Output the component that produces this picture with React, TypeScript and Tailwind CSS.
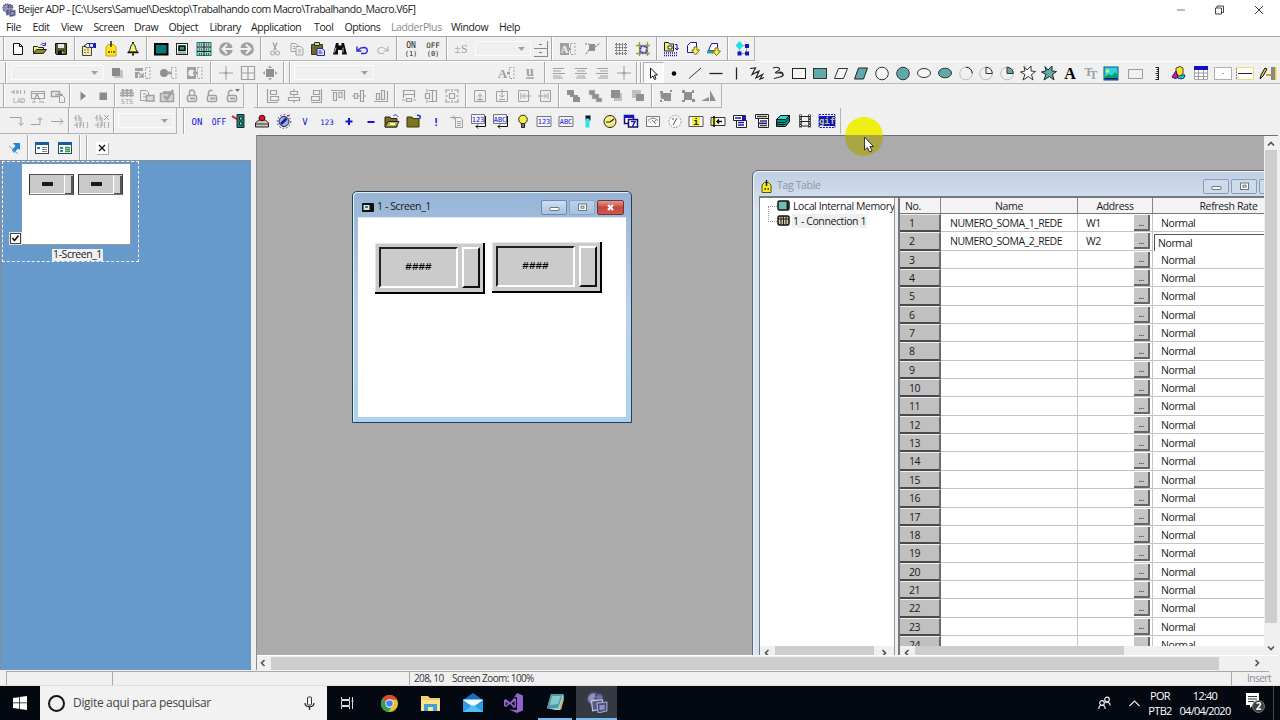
import React from "react";
import clsx from "clsx";

const G = "#a0a0a0";
const TEAL = "#5fa9a9";
const NAVY = "#1616b4";

const PixelText = ({ x = 8, y = 12, size = 7, fill = "#1414d8", weight = "normal", children }: any) => (
  <text
    x={x}
    y={y}
    fontSize={size}
    fill={fill}
    textAnchor="middle"
    fontFamily="DejaVu Sans Mono, monospace"
    fontWeight={weight}
  >
    {children}
  </text>
);

const Serif = ({ x = 8, y = 13, size = 14, fill = G, children }: any) => (
  <text
    x={x}
    y={y}
    fontSize={size}
    fill={fill}
    textAnchor="middle"
    fontFamily="Liberation Serif, serif"
    fontWeight="bold"
  >
    {children}
  </text>
);

const star = "M4 1.5 7 5 11 1 11 6 15.5 6.5 11.5 9.5 13 15 8.500 11.5 3 15 5 9.5 .5 7 5 6Z";
const lock = (
  <g fill="none" stroke={G}>
    <rect x="3.5" y="7.5" width="9" height="6" rx="1.5" strokeWidth="1.6" />
    <path d="M6 10.5h5" strokeWidth="2" />
  </g>
);
const dashes = <path d="M10.5 2.5h4.5v11h-4.5z" stroke={G} strokeDasharray="2 1.5" />;

// All toolbar drawings on a 16x16 grid
const glyphs: Record<string, React.ReactNode> = {
  file: <path d="M3.5 2.5h6l3 3v8h-9zM9.5 2.5v3h3" fill="#fff" stroke="#111" />,
  open: (
    <>
      <path d="M1.5 12.5v-7h4l1 1h5v2" fill="#f5f07a" stroke="#222" />
      <path d="M1.5 12.5l3-4h10l-3 4z" fill="#8a8a20" stroke="#222" />
      <path d="M8.5 4c2-2 4-2 5 0m0-2.5v3h-3" stroke="#2030c0" />
    </>
  ),
  save: (
    <>
      <path d="M2.5 2.5h11v11h-10l-1-1z" fill="#5c5c28" stroke="#111" />
      <path d="M5 3h6v4H5z" fill="#e8e8e8" />
      <path d="M5 9.5h6v4H5z" fill="#111" />
      <path d="M9 10.5h1.5v2H9z" fill="#eee" />
    </>
  ),
  props: (
    <>
      <path d="M1.5 5.5h9v9h-9z" fill="#f6ee9a" stroke="#444" />
      <path d="M3 9h6M3 11.5h6" stroke="#777" strokeDasharray="2 1" />
      <path d="M3 5l4-3 3 3-3 2z" fill="#fff" stroke="#222" />
      <path d="M8 2.500h4.500v4H9z" fill="#d8e0ff" stroke="#2020a0" />
      <path d="M13 2h2v5h-2z" fill="#1818c0" />
    </>
  ),
  tag: (
    <>
      <path d="M3 6l2.5-2.5h5L13 6v9H3z" fill="#fbe61e" stroke="#d0a000" />
      <path d="M8 0v6" stroke="#222" strokeWidth="1.5" />
      <path d="M5 11h2m1 0h1m1 0h2" stroke="#a06000" strokeWidth="2" />
    </>
  ),
  bell: (
    <>
      <path d="M8 2.5c-3 1-2 6-4.5 8.5h9C10 8.5 11 3.5 8 2.5z" fill="#f7f26a" stroke="#222" />
      <path d="M2.5 11.5h11" stroke="#111" strokeWidth="1.5" />
      <path d="M7 13.5h2M8 1v1.5" stroke="#111" strokeWidth="2" />
    </>
  ),
  screen: <rect x="2" y="3" width="12.500" height="10.5" fill="#087878" stroke="#000" strokeWidth="2" />,
  screen2: (
    <>
      <rect x="2.5" y="2.5" width="11" height="11" fill="#fff" stroke="#222" />
      <rect x="5" y="5" width="6" height="4.5" fill="#1aa08e" stroke="#000" strokeWidth="1.5" />
      <path d="M4 12h8" stroke="#555" />
    </>
  ),
  screens: (
    <>
      <rect x="1" y="1.500" width="14" height="13" fill="#a5cfca" stroke="#23786e" />
      <path d="M8 1v14M1 6h14M1 10.5h14" stroke="#222" />
      <path d="M3 3.5h3M3 8.5h3M3 13h3M10 3.5h3M10 8.5h3M10 13h3" stroke="#117b66" strokeWidth="2" strokeDasharray="1 1" />
    </>
  ),
  back: (
    <>
      <circle cx="8" cy="8" r="6.8" fill={G} />
      <path d="M15 8H5M9 3.5 4.5 8 9 12.5" stroke="#f0f0f0" strokeWidth="2" />
    </>
  ),
  fwd: (
    <>
      <circle cx="8" cy="8" r="6.8" fill={G} />
      <path d="M1 8h10M7 3.5 11.5 8 7 12.5" stroke="#f0f0f0" strokeWidth="2" />
    </>
  ),
  cut: (
    <g stroke={G}>
      <path d="M6 1.5 9 9M10 1.5 7 9" strokeWidth="1.3" />
      <circle cx="5.5" cy="12" r="2" />
      <circle cx="10.5" cy="12" r="2" />
    </g>
  ),
  copy: (
    <g stroke={G} fill="#f0f0f0">
      <path d="M2 2.5h5l2 2v6H2z" />
      <path d="M7 5.5h4.5l2.5 2v6.5H7z" />
      <path d="M4 5.5h2M4 7.5h2M9 9h3M9 11h3" />
    </g>
  ),
  paste: (
    <>
      <path d="M1.5 3.5h11v10h-11z" fill="#6f6a2a" stroke="#333" />
      <path d="M4.5 1.5h5v3h-5z" fill="#d0d0a0" stroke="#333" />
      <path d="M7 7.5h5l2.5 2v5H7z" fill="#e4e8ff" stroke="#2424a0" />
      <path d="M8.5 10h3m-3 2h4" stroke="#2424a0" />
    </>
  ),
  find: (
    <>
      <path d="M4 2h2.5v2.5H9.5V2H12l1 4 2 7.5h-5V9H6v4.5H1L3 6z" fill="#0a0a0a" />
      <path d="M4 6.5l-1.5 5M11 6.5v5" stroke="#eee" strokeWidth=".8" />
    </>
  ),
  undo: <path d="M7 12.500h2.500c5 0 5-6 0-6-3 0-4 1-5.500 2.500M3 5.500V10h4.500" stroke="#2626e0" strokeWidth="1.400" />,
  redo: <path d="M9 12.500H6.500c-5 0-5-6 0-6 3 0 4 1 5.500 2.500M13 5.500V10H8.500" stroke="#b0b0b0" strokeWidth="1.200" />,
  onbit: (
    <>
      <PixelText y={7} fill="#222" size={8}>ON</PixelText>
      <PixelText y={14.5} fill="#222" size={7}>(1)</PixelText>
    </>
  ),
  offbit: (
    <>
      <PixelText y={7} fill="#222" size={7.5}>OFF</PixelText>
      <PixelText y={14.5} fill="#222" size={7}>(0)</PixelText>
    </>
  ),
  pms: <text x="8" y="12" fontSize="12" fill={G} textAnchor="middle" fontFamily="Liberation Serif, serif">±S</text>,
  abox: (
    <>
      <path d="M0 2h9v12H0z" fill={G} />
      <Serif x={4.5} y={12} size={11} fill="#f0f0f0">A</Serif>
      <path d="M8 8h3" stroke={G} strokeWidth="3" />
      {dashes}
    </>
  ),
  corner: (
    <>
      <path d="M5 3h6v7H5z" fill="#8f8f8f" />
      <path d="M1 3h4M11 6l5-4M5 9l-4 5" stroke={G} strokeWidth="1.500" strokeDasharray="2 1" />
    </>
  ),
  grid: <path d="M3.5 2v12M6.5 2v12M9.5 2v12M12.5 2v12M2 3.5h12M2 6.5h12M2 9.5h12M2 12.5h12" stroke="#707070" strokeDasharray="1.5 .7" />,
  snap: (
    <>
      <path d="M4.5 1v14M12.5 1v14M1 4.5h14M1 12.5h14" stroke="#9c9c30" strokeWidth="1.3" />
      <rect x="5.5" y="5.5" width="6" height="6" fill="#e8e8ff" stroke="#2020c0" strokeDasharray="2 1" strokeWidth="1.5" />
    </>
  ),
  compile: (
    <>
      <path d="M1.5 1.5h4l1 1.5h4v7h-9z" fill="#f3ee7c" stroke="#222" />
      <path d="M5 5h4v3H5z" fill="#fff" stroke="#333" />
      <path d="M12 3.5h2v5m-2-1.5 2 2 1.5-2" stroke={NAVY} />
      <path d="M1 12h14M1 14.5h14" stroke={NAVY} strokeWidth="1.5" strokeDasharray="1 1" />
    </>
  ),
  download: (
    <>
      <path d="M2.5 11.5V4.5l3-3h6v10z" fill="#fff" stroke={NAVY} />
      <path d="M9 6h3v3h2.5L10.5 14 6.5 9H9z" fill="#fbf04a" stroke="#7a7010" />
    </>
  ),
  download2: (
    <>
      <path d="M2.5 9.5l3-7h6v7z" fill="#fff" stroke={NAVY} />
      <path d="M1 9.5h8v3H1z" fill="#2fa49a" />
      <path d="M9 7h3v3h2.5L10.5 14.5 6.5 10H9z" fill="#fbf04a" stroke="#7a7010" />
    </>
  ),
  nodes: (
    <>
      <path d="M4.5 4.5h7v8h-7z" stroke="#555" strokeDasharray="1 1" />
      <path d="M4.5 0 8.5 4.5 4.5 9 .5 4.500z" fill="#20dce8" />
      <path d="M10 3h4v4h-4zM2.5 10.5h4v4h-4zM10 10.5h4v4h-4z" fill="#1515c8" />
    </>
  ),
  layer: (
    <>
      <path d="M5 5h9v8H5z" fill="#c4c4c4" />
      <path d="M3 3h8v8H3z" fill="#8a8a8a" />
    </>
  ),
  layerRep: (
    <>
      <path d="M0 3h8v3H0zM0 7h3v6H0z" fill={G} />
      <path d="M3 7l5 5M8 8v4H4" stroke={G} strokeWidth="1.5" />
      {dashes}
    </>
  ),
  fillRep: (
    <>
      <circle cx="3" cy="8" r="4" fill="#8f8f8f" />
      <path d="M6 8h5" stroke={G} strokeWidth="3" />
      {dashes}
    </>
  ),
  colorRep: (
    <>
      <rect x="0" y="2" width="9" height="12" fill={G} />
      <circle cx="4.5" cy="8" r="3.2" fill="#f0f0f0" />
      <path d="M6 8h5" stroke={G} strokeWidth="3" />
      {dashes}
    </>
  ),
  cross: (
    <>
      <path d="M1 8h14M8 1v14" stroke={G} />
      <circle cx="8" cy="8" r="1.500" fill={G} />
    </>
  ),
  crossBox: <path d="M1.5 1.5h13v13h-13zM1 8h14M8 1v14" stroke={G} strokeWidth="1.2" />,
  expand: (
    <>
      <rect x="4" y="4" width="8" height="8" fill="#8f8f8f" />
      <path d="M8 .5 10 3H6zM8 15.5 6 13h4zM.5 8 3 6v4zM15.5 8 13 10V6z" fill={G} />
    </>
  ),
  arep: (
    <>
      <Serif x={3.5} y={13} size={13}>A</Serif>
      <path d="M8 8h3" stroke={G} strokeWidth="2.500" />
      {dashes}
    </>
  ),
  under: (
    <>
      <Serif y={11} size={14}>u</Serif>
      <path d="M4 13h8" stroke={G} strokeWidth="1.5" />
    </>
  ),
  alignL: <path d="M2 3.5h11M2 6h8M2 8.5h12M2 11h8M2 13h10" stroke={G} />,
  alignC: <path d="M2 3.5h12M4 6h8M2 8.5h12M4 11h8M3 13h10" stroke={G} />,
  alignR: <path d="M3 3.5h11M6 6h8M2 8.5h12M6 11h8M4 13h10" stroke={G} />,
  cursor: <path d="M5.5 2v10l2.5-2 1.5 3.5 1.5-.8L9.5 9h3z" fill="#fff" stroke="#111" />,
  dot: <circle cx="8" cy="8.5" r="2.3" fill="#000" />,
  line: <path d="M2 13.5 14 3" stroke="#333" />,
  hline: <path d="M1.5 8.5h13" stroke="#222" strokeWidth="1.3" />,
  vline: <path d="M8.5 2.5v12" stroke="#222" strokeWidth="1.3" />,
  poly: <path d="M1 3.500 6.500 3 3 9.500 10 6 7 13 13.500 9.500 11 14 15 12.500" stroke="#222" strokeWidth="1.200" />,
  free: <path d="M3 3c5-2 9 1 5 3s-3 2 1 2c6 0 5 3 1 4s-6 1-6 2M8 8c4-2 6 0 4 3" stroke="#222" strokeWidth="1.1" />,
  rect: <rect x="1.5" y="3.5" width="13" height="10" fill="#f6f6f6" stroke="#222" />,
  rectf: <rect x="1.5" y="3.5" width="13" height="10" fill={TEAL} stroke="#333" />,
  par: <path d="M5.5 3.5h9l-4 10h-9z" fill="#f6f6f6" stroke="#333" />,
  parf: <path d="M5.5 3h9l-4 11h-9z" fill={TEAL} stroke="#222" />,
  circ: <circle cx="8" cy="8.5" r="6.3" fill="#f6f6f6" stroke="#333" />,
  circf: <circle cx="8" cy="8.5" r="6.3" fill={TEAL} stroke="#333" />,
  ell: <ellipse cx="8" cy="8" rx="6.5" ry="4.5" fill="#f6f6f6" stroke="#333" />,
  ellf: <ellipse cx="8" cy="8" rx="6.5" ry="4.8" fill={TEAL} stroke="#333" />,
  arc: (
    <>
      <circle cx="8" cy="8.5" r="6.3" stroke="#c0c0c0" />
      <path d="M8 2.2a6.3 6.3 0 0 1 6.3 6.3" stroke="#222" />
    </>
  ),
  pie: (
    <>
      <circle cx="8" cy="8.5" r="6.3" stroke="#bbb" />
      <path d="M8 2.2v6.3h6.3A6.3 6.3 0 0 0 8 2.2z" fill="#f6f6f6" stroke="#333" />
    </>
  ),
  pief: (
    <>
      <circle cx="8" cy="8.5" r="6.3" stroke="#bbb" />
      <path d="M8 2.2v6.3h6.3A6.3 6.3 0 0 0 8 2.2z" fill={TEAL} stroke="#333" />
    </>
  ),
  star: <path d={star} fill="#fff" stroke="#333" />,
  starf: <path d={star} fill={TEAL} stroke="#222" />,
  textA: <Serif size={16} y={14} fill="#000">A</Serif>,
  textT: (
    <Serif y={11} size={12}>
      T<tspan dx="-3" dy="3">T</tspan>
    </Serif>
  ),
  picture: (
    <>
      <rect x="1" y="2" width="14" height="13" fill="#25d5ee" stroke="#1a4a70" />
      <circle cx="4.5" cy="6" r="1.8" fill="#f8f23c" />
      <path d="M1.5 12 6 9l3 2 3-4 2.5 3v4.5h-13z" fill="#0e9c60" />
      <path d="M1.5 13h13v1.5h-13z" fill="#101880" />
    </>
  ),
  panel: <path d="M1.5 4.5h14v9h-14z" fill="#f0f0f0" stroke="#9a9a9a" />,
  scale: <path d="M9.5 2v13M6.500 2.500h3M7.5 4.5h2M7.5 6.5h2M6.500 8.500h3M7.5 10.5h2M7.5 12.5h2M6.500 14.500h3" stroke="#222" />,
  shapes: (
    <>
      <path d="M6 10a4 4 0 1 0 8 0z" fill="#15c8d8" stroke="#146" />
      <path d="M5 3l4-1.5 3 1.5v6L8.5 11 5 9z" fill="#f6e42a" stroke="#443" />
      <path d="M5 6 1 12l3 1.5 3-1z" fill="#c41ac4" stroke="#504" />
    </>
  ),
  table: (
    <>
      <path d="M1.5 1.5h13v13h-13z" fill="#fff" stroke="#aaa" />
      <path d="M1 1h14v4H1z" fill="#1010c0" />
      <path d="M1 8h14M1 11.5h14M5.5 5v10M10.5 5v10" stroke="#999" />
    </>
  ),
  box1: (
    <>
      <rect x="-.5" y="2.5" width="17" height="12" fill="#fff" stroke="#b0b0b0" />
      <path d="M7.5 8.5h1.5" stroke="#888" />
    </>
  ),
  box2: (
    <>
      <rect x="-.5" y="2.5" width="17" height="12" fill="#fff" stroke="#e8e080" />
      <path d="M-.5 3v11" stroke="#c07070" strokeDasharray="2 1" />
      <path d="M1 8.5h14" stroke="#222" />
    </>
  ),
  pencil: (
    <>
      <path d="M1 14l1-4 4-7 2 1-4 7z" fill="#e2d438" stroke="#111" />
      <path d="M7 10h5" stroke="#e0a020" strokeWidth="2" />
      <path d="M12 2h4v13h-4z" fill="#888" />
      <path d="M16 2h1.500v13H16z" fill="#e6d838" />
    </>
  ),
  lad: (
    <>
      <path d="M1 4h3M4 2v4M7 2v4M7 4h2M11 2c-1 1-1 3 0 4M14 2c1 1 1 3 0 4" stroke={G} />
      <PixelText y={14.5} x={9} fill={G} size={7}>LAD</PixelText>
    </>
  ),
  ladwin: <path d="M1.5 3.5h13v7h-13zM4 12l3-6 3 6M2 14h4m3 0h5M1.5 5.5h13" stroke={G} strokeWidth="1.2" />,
  winCopy: (
    <g stroke={G}>
      <path d="M1.5 3.5h8v5h-8zM5 6.5h7v4" strokeWidth="1.5" />
      <path d="M9.5 7.5h3l2 2v5h-5z" fill="#eee" />
    </g>
  ),
  play: <path d="M5.5 3.5 11 8l-5.5 4.5z" fill="#888" />,
  stop: <path d="M4.500 4.500h7.500v7.500H4.500z" fill="#8b8b8b" />,
  sts: (
    <>
      <path d="M2 2.500h12M1 5h14M1 7.500h14M4 1v8M8 1v8M12 1v8" stroke={G} strokeWidth="1.500" />
      <PixelText y={15.5} fill={G} size={7}>STS</PixelText>
    </>
  ),
  docDev: (
    <g stroke={G}>
      <path d="M1.5 2.5h6l2 2v8h-8zM4 6h3M4 9h3" />
      <path d="M7.500 7.500h7.500v5.500H7.500z" fill="#ddd" strokeWidth="1.5" />
    </g>
  ),
  checkDev: (
    <g stroke={G}>
      <path d="M1.5 5.500h13v8h-13zM4 4h8" fill="#d4d4d4" strokeWidth="1.5" />
      <path d="M5 8l3 3 6-9" strokeWidth="2.5" />
    </g>
  ),
  lock1: (
    <>
      {lock}
      <path d="M5.5 7V4.5a2.5 2.5 0 0 1 5 0V7" stroke={G} strokeWidth="1.5" />
    </>
  ),
  lock2: (
    <>
      {lock}
      <path d="M4.5 7V4a2.5 2.5 0 0 1 4-1" stroke={G} strokeWidth="1.5" />
    </>
  ),
  lock3: (
    <>
      {lock}
      <path d="M4.5 7V4a2.5 2.5 0 0 1 4-1" stroke={G} strokeWidth="1.5" />
      <path d="M11 1h5l-2.5 3z" fill="#777" />
    </>
  ),
  al1: <path d="M2.5 1v14M3 14.500h10M5.5 2.500h6v4h-6zM5.5 8.500h8v4h-8z" stroke={G} strokeWidth="1.2" />,
  al2: <path d="M8 1v2M8 6.500v2M8 13v2M4.5 3.5h7v3h-7zM2.5 9.5h11v3h-11z" stroke={G} strokeWidth="1.2" />,
  al3: <path d="M13.5 1v14M3 14.500h10M5.5 2.500h6v4h-6zM3.5 8.500h8v4h-8z" stroke={G} strokeWidth="1.2" />,
  al4: <path d="M1 2.5h14M14.500 2v10M3.5 4.5h3v8h-3zM9 4.500h3v5H9z" stroke={G} strokeWidth="1.2" />,
  al5: <path d="M1 8h2.500M6.500 8h3M12.500 8H15M3.5 5.5h3v5h-3zM9.5 2.5h3v11h-3z" stroke={G} strokeWidth="1.2" />,
  al6: <path d="M1 13.5h14M14.500 3v10M3.5 5.500h3v6h-3zM8.500 2.500h3v9h-3z" stroke={G} strokeWidth="1.2" />,
  sz1: <path d="M2.5 2.5h11v4h-11zM5.5 10.5h5v3h-5zM1 12h3m8 0h3M2.5 7v3M13.5 7v3" stroke={G} strokeWidth="1.2" />,
  sz2: <path d="M9.5 2.5h4v11h-4zM2.5 5.5h4v5h-4zM4 1v3m0 8v3M6 2.5h3M6 13.5h3" stroke={G} strokeWidth="1.2" />,
  sz3: <path d="M2 5V2h4m4 0h4v3m0 6v3h-4m-4 0H2v-3M5.5 5.5h5v5h-5zM8 1v3m0 8v3M1 8h3m8 0h3" stroke={G} strokeWidth="1.2" />,
  mv1: <path d="M2.5 2.5h11v11h-11zM8 13V6M5.5 8.5 8 6l2.5 2.5M5 11.5h6" stroke={G} />,
  mv2: <path d="M2.5 3.5h11v10h-11zM8 1v8M5.5 7 8 9.5 10.5 7M5 11.5h6" stroke={G} />,
  mv3: <path d="M2.5 2.5h10v11h-10zM15 8H7M9 5.5 6.5 8 9 10.5M5 5v6" stroke={G} />,
  mv4: <path d="M3.5 2.5h10v11h-10zM1 8h8M7 5.5 9.5 8 7 10.5M11 5v6" stroke={G} />,
  z1: <path d="M2 2h7v5h4v2h2v5H8V9H5V7H2z" fill="#8f8f8f" />,
  z2: <path d="M2 2h6v4h4v4h3v4H9v-3H5V7H2z" fill="#8f8f8f" stroke="#d0d0d0" strokeWidth=".6" />,
  z3: (
    <>
      <path d="M6 5h8v8H6z" fill="#c0c0c0" />
      <path d="M3 2h9v8H3z" fill="#8f8f8f" />
    </>
  ),
  z4: (
    <>
      <path d="M2 2h9v8H2z" fill="#c0c0c0" />
      <path d="M6 6h8v7H6z" fill="#909090" />
    </>
  ),
  g1: <path d="M2 3h3v2h8v8H6v-2H3zM12 2h2v2h-2zM2 12h2v2H2z" fill="#8f8f8f" />,
  g2: <path d="M2 2h3v2h7V2h2v3h-2v6h3v3h-3v-2H5v2H2v-2h2V5H2z" fill="#8f8f8f" />,
  tri: <path d="M0 13 8 9v4zM9 2l6 11H9z" fill="#8f8f8f" />,
  ar1: <path d="M2 4.5h11V12M10.5 10l2.5 2.5 2.5-2.5" stroke={G} />,
  ar2: <path d="M2 11.5h9V5M8.5 7 11 4.5 13.5 7" stroke={G} />,
  ar3: <path d="M2 8.5h12M11 5.5l3 3-3 3" stroke={G} />,
  ld1: <path d="M1 5h2M3 2v6M6 2v6M6 5h2v6M1 12h3M4 9v6M7 9v6M7 12h2M11 9c-1 2-1 4 0 6M14 9c1 2 1 4 0 6" stroke={G} />,
  ld2: <path d="M1 5h2M3 2v6M6 2v6M6 5h2v6M1 12h3M4 9v6M7 9v6M7 12h2M11 9c-1 2-1 4 0 6M14 9c1 2 1 4 0 6M10 2l5 5m0-5-5 5" stroke={G} />,
  on: <PixelText y={11.5} size={9}>ON</PixelText>,
  off: <PixelText y={11.5} size={8}>OFF</PixelText>,
  sw: (
    <>
      <path d="M5 1.5h7v13H5z" fill="#148484" stroke="#222" />
      <path d="M7.5 4h2.500v3H7.500zM7.5 9h2.500v3H7.500z" fill="#7be0da" stroke="#111" strokeWidth=".8" />
      <path d="M0 3l5.500 3.500" stroke="#d01818" strokeWidth="2" />
    </>
  ),
  push: (
    <>
      <path d="M1.5 10l3-3h7l3 3v4h-13z" fill="#c8c8b8" stroke="#222" />
      <ellipse cx="8" cy="5" rx="3" ry="2.8" fill="#d81818" stroke="#501010" />
      <path d="M2 11h12" stroke="#333" />
    </>
  ),
  knob: (
    <>
      <circle cx="8" cy="8.5" r="5" fill="#9fb0d8" stroke="#222" />
      <circle cx="8" cy="8.5" r="6.800" stroke="#2020c0" strokeDasharray="1.5 2" />
      <path d="M5 11l5.500-5.500" stroke="#1818b0" strokeWidth="2.5" />
      <path d="M11 3l3-1" stroke="#c02020" />
    </>
  ),
  v: <PixelText y={11.5} size={9}>V</PixelText>,
  n123: <PixelText y={11.5} size={7.5}>123</PixelText>,
  plus: <path d="M8 5v7M4.500 8.500h7" stroke="#1414d8" strokeWidth="2" />,
  minus: <path d="M4.500 9h7" stroke="#1414d8" strokeWidth="2" />,
  fin: (
    <>
      <path d="M1 4h5l1 1.500h6V14H1z" fill="#777018" stroke="#222" />
      <path d="M4 8.500h11L12 14H1z" fill="#b9b23a" stroke="#222" />
      <path d="M9 3c2-2 4-1 5 1" stroke="#2030c0" />
      <path d="M6 10h5v2H6z" fill="#f4f4d0" />
    </>
  ),
  fout: (
    <>
      <path d="M1 4h5l1 1.500h6V14H1z" fill="#7c7420" stroke="#3a3608" />
      <path d="M11 2l3 1v3" stroke="#2030c0" strokeWidth="1.500" />
    </>
  ),
  bang: <PixelText y={12.5} size={11} weight="bold">!</PixelText>,
  docAr: <path d="M1 4.500h5M4 2.500l2 2-2 2M6.500 4.500h5l2 2v8h-7zM8 8.500h4M8 10.500h4M8 12.500h4" stroke={G} />,
  in123: (
    <>
      <path d="M.5 1.500h13v9H.5z" fill="#f4f4ff" stroke="#777" />
      <PixelText y={8.800} x={7} size={7}>123</PixelText>
      <path d="M14.500 3v10.500H5M7 11.500l-2 2 2 2" stroke="#111" />
    </>
  ),
  inabc: (
    <>
      <path d="M.5 1.500h13v9H.5z" fill="#f4f4ff" stroke="#777" />
      <PixelText y={8.800} x={7} size={7}>ABC</PixelText>
      <path d="M14.500 3v10.500H5M7 11.500l-2 2 2 2" stroke="#111" />
    </>
  ),
  bulb: (
    <>
      <circle cx="8" cy="6.500" r="4.300" fill="#f8ee3a" stroke="#222" />
      <path d="M6.500 10.500h3v4h-3z" fill="#777" stroke="#222" />
    </>
  ),
  b123: (
    <>
      <path d="M1 3.500h14v10H1z" fill="#f4f4ff" stroke="#777" />
      <PixelText y={11} size={7}>123</PixelText>
    </>
  ),
  babc: (
    <>
      <path d="M1 3.500h14v10H1z" fill="#f4f4ff" stroke="#777" />
      <PixelText y={11} size={7}>ABC</PixelText>
    </>
  ),
  bar: (
    <>
      <path d="M5.500 2.500h5v5h-5z" fill="#111" />
      <path d="M5.500 5.500h4v9h-4z" fill="#2fe0e8" />
    </>
  ),
  clock: (
    <>
      <circle cx="8" cy="8.500" r="6" fill="#f5ef7c" stroke="#222" />
      <path d="M8 9l4-3M8 9H4" stroke="#222" strokeWidth="1.200" />
    </>
  ),
  win: (
    <>
      <path d="M1.500 2.500h9v8h-9z" fill="#fff" stroke="#101070" strokeWidth="1.500" />
      <path d="M1 2h10v3H1z" fill={NAVY} />
      <path d="M5.500 6.500h9v7.500h-9z" fill="#fff" stroke="#101070" strokeWidth="1.500" />
      <path d="M8 8.500h4l-2.500 5" stroke={NAVY} strokeWidth="1.500" />
    </>
  ),
  meter: (
    <>
      <path d="M1.500 3.500h13v10h-13z" fill="#fafafa" stroke="#777" />
      <path d="M3 7.500c3-3 7-3 10 0M7 7l4 4M11 7l-2 2M4.500 8.500l1 1" stroke="#777" />
    </>
  ),
  gauge: (
    <>
      <circle cx="8" cy="8.500" r="6" fill="#fafafa" stroke="#999" strokeDasharray="2 1" />
      <path d="M6 12l4-7M5 6h2" stroke="#555580" />
    </>
  ),
  info: (
    <>
      <path d="M1 3.500h14v10H1z" fill="#fff" stroke="#555" />
      <path d="M4 4h8v9H4z" fill="#f9f140" />
      <PixelText y={12} size={9} fill="#222" weight="bold">i</PixelText>
    </>
  ),
  io: (
    <>
      <path d="M1 4.500h14v8H1z" fill="#fff" stroke="#333" />
      <path d="M2 5h4v7H2z" fill="#f9f140" />
      <path d="M4 3v11M7 8.500h5M9 6.500l-2 2 2 2" stroke="#000" strokeWidth="1.400" />
    </>
  ),
  comb1: (
    <>
      <path d="M1.500 2.500h12v5h-12zM4.500 7.500h10v7h-10z" fill="#fff" stroke="#222" />
      <path d="M10 3h4v4h-4z" fill={NAVY} />
      <path d="M3 5h6M6 9.500h6M6 12h6" stroke={NAVY} strokeWidth="1.500" />
    </>
  ),
  comb2: (
    <>
      <path d="M1.500 1.500h13v4h-13zM4.500 5.500h10v9h-10z" fill="#fff" stroke="#222" />
      <path d="M3 3.500h10M6 8h7M6 12.500h7" stroke="#333" strokeWidth="1.300" />
      <path d="M5 9.500h8v1.500H5z" fill={NAVY} />
    </>
  ),
  stack: (
    <>
      <path d="M1.500 6.500l4-4h9v6l-4 5h-9z" fill="#0c8a80" stroke="#111" />
      <path d="M1.500 6.500h9l4-4h-9z" fill="#22e0d0" stroke="#111" />
      <path d="M2 9.500h8l4-4M2 11.500h8" stroke="#0a2a20" />
    </>
  ),
  film: (
    <>
      <path d="M3.500 1.500v13M12.500 1.500v13" stroke="#222" strokeWidth="2.500" />
      <path d="M3.500 2v13M12.500 2v13" stroke="#eee" strokeDasharray="1 1.500" />
      <path d="M4 3.500h8M4 8.500h8M4 13h8" stroke="#222" />
    </>
  ),
  gif: (
    <>
      <path d="M0 1.500h16v13H0z" stroke="#1414d8" strokeDasharray="2 1" />
      <path d="M0 3h16v10H0z" fill="#1212b0" />
      <PixelText y={11} size={9} fill="#b8c890" weight="bold">gif</PixelText>
    </>
  ),
};

function Glyph({ name }: { name: string }) {
  return (
    <svg width="16" height="16" viewBox="0 0 16 16" fill="none" className="shrink-0 overflow-visible">
      {glyphs[name]}
    </svg>
  );
}

function Sep({ className = "w-[6.6px]" }: { className?: string }) {
  return (
    <div className={clsx("flex shrink-0 justify-center self-stretch", className)}>
      <div className="w-[2px] border-l border-[#a8a8a8] bg-white" />
    </div>
  );
}

function Tools({ names, cell, sep }: { names: string; cell: string; sep?: string }) {
  return (
    <div className="flex shrink-0 items-center self-stretch">
      {names.split(" ").map((n, i) =>
        n === "|" ? (
          <Sep key={i} className={sep} />
        ) : (
          <div
            key={i}
            className={clsx(
              "flex shrink-0 justify-center",
              cell,
              n === "cursor" && "self-stretch border border-[#b0b0b0] border-r-white border-b-white bg-[#f9f9f9] pt-[3px]",
            )}
          >
            <Glyph name={n} />
          </div>
        ),
      )}
    </div>
  );
}

function Combo({ className }: { className: string }) {
  return (
    <div className={clsx("flex h-[15px] shrink-0 items-center justify-end border border-[#fbfbfb] pr-[5px]", className)}>
      <svg width="7" height="4" viewBox="0 0 7 4">
        <path d="M0 0h7L3.5 4z" fill="#a0a0a0" />
      </svg>
    </div>
  );
}

function Caption({ kind }: { kind: "min" | "max" | "close" }) {
  return (
    <svg width="13" height="9" viewBox="0 0 13 9" fill="none">
      {kind === "min" && <rect x="2" y="4.5" width="9" height="3" rx=".5" fill="#fff" stroke="#6d7480" />}
      {kind === "max" && (
        <>
          <rect x="2.500" y="1" width="8" height="6.500" fill="#fff" stroke="#6d7480" />
          <rect x="5" y="3.200" width="3" height="2" fill="#fff" stroke="#6d7480" />
        </>
      )}
      {kind === "close" && <path d="M4 2l5 5M9 2 4 7" stroke="#fff" strokeWidth="2.2" />}
    </svg>
  );
}

function NumericEntry({ className }: { className?: string }) {
  return (
    <div
      className={clsx(
        "flex h-[51px] w-[110px] border-r-2 border-b-2 border-r-black border-b-black bg-[#cbcbcb] pt-[4px] pb-[4px] pl-[4px] shadow-[inset_1px_1px_0_#e4e4e4]",
        className,
      )}
    >
      <div className="flex w-[79px] items-center justify-center border-2 border-t-[#222] border-r-white border-b-white border-l-[#222] font-['Liberation_Mono',monospace] text-[11px] font-bold text-black">
        ####
      </div>
      <div className="ml-[4px] w-[18px] border-2 border-t-white border-r-[#111] border-b-[#111] border-l-white" />
    </div>
  );
}

function Thumb() {
  return (
    <div className="flex h-[21px] w-[45px] border border-t-[#555] border-r-[#444] border-b-[#777] border-l-[#333] bg-[#c9c9c9]">
      <div className="flex flex-1 items-center justify-center border-r border-b border-white">
        <div className="h-[4px] w-[11px] bg-[#181818]" />
      </div>
      <div className="mt-px w-[8px] border-r-2 border-b border-[#555] border-l-white bg-[#d2d2d2]" />
    </div>
  );
}

function Chevron({ d }: { d: string }) {
  return (
    <svg width="8" height="8" viewBox="0 0 8 8" fill="none" className="shrink-0">
      <path d={d} stroke="#505050" strokeWidth="1.6" />
    </svg>
  );
}
const LEFT = "M5.5 1 2.5 4l3 3";
const RIGHT = "M2.5 1l3 3-3 3";
const UP = "M1 5.5l3-3 3 3";
const DOWN = "M1 2.5l3 3 3-3";

const tags = [
  { name: "NUMERO_SOMA_1_REDE", address: "W1" },
  { name: "NUMERO_SOMA_2_REDE", address: "W2" },
];

const menus = [
  { label: "File", w: "w-[26.5px]" },
  { label: "Edit", w: "w-[28.5px]" },
  { label: "View", w: "w-[32.5px]" },
  { label: "Screen", w: "w-[40.5px]" },
  { label: "Draw", w: "w-[34.5px]" },
  { label: "Object", w: "w-[41px]" },
  { label: "Library", w: "w-[41.5px]" },
  { label: "Application", w: "w-[63px]" },
  { label: "Tool", w: "w-[30.5px]" },
  { label: "Options", w: "w-[46.5px]" },
  { label: "LadderPlus", w: "w-[60px]", off: true },
  { label: "Window", w: "w-[48px]" },
  { label: "Help", w: "w-[40px]" },
];

function AppLogo({ size }: { size: number }) {
  return (
    <svg width={size} height={size} viewBox="0 0 20 20" fill="none">
      <circle cx="7" cy="7" r="5.5" fill="#8f93b8" stroke="#4c5078" strokeWidth="2" strokeDasharray="2 1.2" />
      <circle cx="12" cy="6" r="3.5" fill="#6d7199" stroke="#3e4268" strokeWidth="1.5" strokeDasharray="2 1" />
      <path d="M5 9l10-1 1 8-10 2z" fill="#565b86" stroke="#c6c9e4" />
      <path d="M10 11l9-1v8l-8 2z" fill="#474c78" stroke="#a4a9cc" />
      <path d="M12 13l5-.5v4L12.5 17.5z" fill="#8a94c0" />
    </svg>
  );
}

function TopBar() {
  return (
    <div className="bg-white">
      <div className="flex h-[19px] items-center pl-[2px]">
        <AppLogo size={14} />
        <span className="ml-[2px] text-[10.5px] tracking-[-0.5px] whitespace-nowrap">
          Beijer ADP - [C:\Users\Samuel\Desktop\Trabalhando com Macro\Trabalhando_Macro.V6F]
        </span>
        <svg width="92" height="12" viewBox="0 0 92 12" fill="none" className="mr-[13px] ml-auto">
          <path d="M2 6h8" stroke="#777" />
          <path d="M40.5 4h6v6h-6zM42 4V2h6.5v6.5h-2" stroke="#444" />
          <path d="M80 2l8 8M88 2l-8 8" stroke="#333" />
        </svg>
      </div>
      <div className="flex h-[17px] items-center pl-[6px]">
        {menus.map((m) => (
          <div
            key={m.label}
            className={clsx("shrink-0 text-[10.5px] tracking-[-0.4px] whitespace-nowrap", m.w, m.off && "text-[#8a8a8a]")}
          >
            {m.label}
          </div>
        ))}
      </div>
    </div>
  );
}

function Toolbars() {
  return (
    <div className="h-[99px] overflow-hidden border-t border-[#a8a8a8] bg-[#f0f0f0]">
      <div className="flex h-[24px] w-[755px] items-center border-r border-b border-[#b4b4b4]">
        <Sep className="w-[7.2px]" />
        <Tools
          names="file open save | props tag bell | screen screen2 screens back fwd | cut copy paste find undo redo | onbit offbit | pms"
          cell="w-[21.6px]"
        />
        <Combo className="ml-[3px] w-[56px]" />
        <div className="ml-[3px] flex h-[16px] w-[14px] flex-col border-r border-b border-[#888]">
          <div className="flex flex-1 items-center justify-center border-b border-[#888]">
            <div className="h-px w-[3px] bg-[#777]" />
          </div>
          <div className="flex flex-1 items-center justify-center">
            <div className="h-px w-[3px] bg-[#777]" />
          </div>
        </div>
        <Sep className="w-[8px]" />
        <Tools names="abox corner" cell="w-[24px]" />
        <Tools names="| grid snap | compile download download2 | nodes" cell="w-[21.6px]" />
      </div>

      <div className="flex h-[23px] items-center border-t border-b border-t-white border-b-[#b8b8b8]">
        <Sep className="w-[11px]" />
        <Combo className="w-[93px]" />
        <Tools names="layer layerRep fillRep colorRep" cell="w-[26px]" />
        <Tools names="| cross crossBox expand |" cell="w-[22px]" />
        <Sep />
        <Combo className="w-[80px]" />
        <div className="ml-[122px] flex self-stretch">
          <Tools names="arep under" cell="w-[23px]" />
        </div>
        <Tools names="| alignL alignC alignR cross" cell="w-[21.6px]" />
        <Sep className="w-[4px]" />
        <Sep className="w-[4px]" />
        <Tools
          names="cursor dot line hline vline poly free rect rectf par parf circ circf ell ellf arc pie pief star starf textA textT picture"
          cell="w-[20.83px]"
        />
        <div className="ml-[2px] flex self-stretch">
          <Tools names="panel scale shapes table box1 box2 pencil" cell="w-[22px]" />
        </div>
      </div>

      <div className="flex h-[24px] items-center">
        <div className="flex w-[244px] items-center self-stretch border-r border-b border-[#b4b4b4]">
          <Sep className="w-[8px]" />
          <Tools
            names="lad ladwin winCopy | play stop | sts docDev checkDev | lock1 lock2 lock3"
            cell="w-[20.1px]"
            sep="w-[4.4px]"
          />
        </div>
        <div className="ml-[10px] flex w-[468px] items-center self-stretch border-r border-b border-[#b4b4b4]">
          <Sep className="w-[8px]" />
          <Tools
            names="al1 al2 al3 al4 al5 al6 | sz1 sz2 sz3 | mv1 mv2 mv3 mv4 | z1 z2 z3 z4 | g1 g2 tri"
            cell="w-[21.6px]"
          />
        </div>
      </div>

      <div className="flex h-[26px] items-center">
        <div className="flex w-[177px] items-center self-stretch border-r border-b border-[#b4b4b4] pl-[6px]">
          <Tools names="ar1 ar2 ar3 | ld1 ld2 |" cell="w-[20.4px]" sep="w-[4.1px]" />
          <Combo className="ml-[2px] w-[56px]" />
        </div>
        <div className="flex w-[664px] items-center self-stretch border-r border-[#b4b4b4] pl-[4px]">
          <Sep className="w-[5px]" />
          <Tools
            names="on off sw push knob v n123 plus minus fin fout bang docAr in123 inabc bulb b123 babc bar clock win meter gauge info io comb1 comb2 stack film gif"
            cell="w-[21.72px]"
          />
        </div>
      </div>
    </div>
  );
}

function ScreenManager() {
  return (
    <div className="flex w-[257px] shrink-0 flex-col border-r border-[#8c8c8c] bg-[#f0f0f0] pr-[5px]">
      <div className="flex h-[26px] items-center border-b border-[#8c8c8c] pl-[7px]">
        <svg width="16" height="16" viewBox="0 0 16 16" fill="none">
          <path d="M6 3h7v7l-2-1.500L7 13 5 10l3.500-4z" fill="#2184d4" />
          <path d="M2 6l9 8" stroke="#7a9fc0" />
        </svg>
        <Sep className="w-[10px]" />
        {["#18a", "#2a4"].map((c, i) => (
          <svg key={c} width="16" height="16" viewBox="0 0 16 16" fill="none" className={i ? "ml-[7px]" : "ml-px"}>
            <rect x="1.5" y="2.5" width="13" height="11" fill="#fff" stroke="#345" />
            <path d="M1 2h14v3H1z" fill="#1c5aa8" />
            <path d="M3 7h3v2H3z" fill={c} />
            <path d="M8 7.5h5M8 9.5h5M8 11.5h5" stroke={i ? "#2a9c50" : "#888"} strokeWidth={i ? 1.3 : 1} />
            {i === 1 && <path d="M3 10h3v2H3z" fill="#1a8ac8" />}
          </svg>
        ))}
        <Sep className="ml-[3px] w-[7px]" />
        <Sep className="w-[7px]" />
        <div className="ml-[6px] flex h-[12px] w-[12px] items-center justify-center bg-white shadow-[1px_1px_0_#aaa]">
          <svg width="8" height="8" viewBox="0 0 8 8">
            <path d="M1 1l6 6M7 1 1 7" stroke="#111" strokeWidth="1.4" />
          </svg>
        </div>
      </div>
      <div className="flex-1 border-l border-[#8c8c8c] bg-[#6699cc] pl-px">
        <div className="flex h-[101px] w-[137px] flex-col border border-dashed border-white/90">
          <div className="flex pt-[2px] pl-[6px]">
            <div className="flex h-[13px] w-[13px] shrink-0 items-center justify-center self-end border border-[#e0e0e0] bg-white">
              <svg width="11" height="11" viewBox="0 0 11 11" fill="none">
                <rect x=".5" y=".5" width="10" height="10" stroke="#444" />
                <path d="M2.5 5l2 2.5 4-5" stroke="#111" strokeWidth="1.6" />
              </svg>
            </div>
            <div className="flex h-[81px] w-[109px] gap-[4px] border-r border-b border-[#999] bg-white pt-[10px] pl-[7px]">
              <Thumb />
              <Thumb />
            </div>
          </div>
          <div className="mt-[4px] ml-[49px] flex h-[12px] w-[51px] items-center justify-center bg-[#f0f0f0] text-[10.5px] tracking-[-0.45px] whitespace-nowrap">
            1-Screen_1
          </div>
        </div>
      </div>
    </div>
  );
}

function ScreenWindow() {
  return (
    <div className="absolute top-[55px] left-[95px] h-[232px] w-[280px] rounded-t-[5px] border border-[#26404e] bg-linear-to-b from-[#97b4d6] via-[#b8d2ee] to-[#a9d3ee] px-[5px] pb-[5px] shadow-[inset_1px_1px_0_#e6f1fb]">
      <div className="flex h-[25px] items-center pt-[5px] pl-[4px]">
        <svg width="12" height="9" viewBox="0 0 12 9">
          <rect width="12" height="9" rx="1" fill="#111" />
          <path d="M1.5 2h6v5h-6z" fill="#d8e8d8" />
          <path d="M3 3h3v2H3z" fill="#2a8a90" />
        </svg>
        <span className="ml-[3px] text-[10.5px] tracking-[-0.4px]">1 - Screen_1</span>
        <div className="ml-auto flex gap-[2px] pr-[2px]">
          <div className="flex h-[15px] w-[26px] items-center justify-center rounded-[2px] border border-[#7089a8] bg-linear-to-b from-[#cfe0f2] to-[#a6c2e0]">
            <Caption kind="min" />
          </div>
          <div className="flex h-[15px] w-[26px] items-center justify-center rounded-[2px] border border-[#89a4c6] bg-linear-to-b from-[#bcd2ea] to-[#a6c2e0]">
            <Caption kind="max" />
          </div>
          <div className="flex h-[15px] w-[27px] items-center justify-center rounded-[2px] border border-[#7a3030] bg-linear-to-b from-[#e09a90] via-[#c8453a] to-[#c85a4c]">
            <Caption kind="close" />
          </div>
        </div>
      </div>
      <div className="flex h-[200px] border-t border-[#dde8f4] bg-white pt-[24px] pl-[17px]">
        <NumericEntry className="mt-px" />
        <NumericEntry className="ml-[7px]" />
      </div>
    </div>
  );
}

function TagTable() {
  return (
    <div className="absolute top-[34px] left-[495px] flex h-[524px] w-[570px] flex-col rounded-tl-[6px] border border-[#5f6770] bg-linear-to-b from-[#c0cfe2] to-[#d7e4f2] to-[40px] pl-[6px] shadow-[inset_1px_1px_0_#eef4fa]">
      <div className="flex h-[25px] shrink-0 items-center pt-[5px] pl-[1px]">
        <svg width="13" height="13" viewBox="0 0 13 13">
          <path d="M2 5l2.5-2.5h4L11 5v7.5H2z" fill="#fbe61e" stroke="#55501a" />
          <path d="M6.5 0v6M4.5 9h1.5M7.5 9H9" stroke="#222" strokeWidth="1.5" />
        </svg>
        <span className="ml-[4px] text-[10.5px] tracking-[-0.35px] text-[#8d959f]">Tag Table</span>
        <div className="ml-auto flex gap-[2px] pr-[36px]">
          {(["min", "max", "close"] as const).map((k) => (
            <div
              key={k}
              className="flex h-[15px] w-[26px] items-center justify-center rounded-[2px] border border-[#8b9db5] bg-[#cddbeb]"
            >
              {k !== "close" && <Caption kind={k} />}
            </div>
          ))}
        </div>
      </div>
      <div className="flex flex-1 border-t-2 border-l border-[#74797f]">
        <div className="flex w-[134px] shrink-0 flex-col bg-white">
          <div className="h-[448px] shrink-0 overflow-hidden">
            <div className="mt-[8px] ml-[8px] flex h-[16px] w-[9px] border border-r-0 border-dotted border-[#999]" />
            <div className="-mt-[24px] ml-[17px] flex flex-col">
              {["Local Internal Memory", "1 - Connection 1"].map((label, i) => (
                <div key={label} className="flex h-[15px] items-center">
                  <svg width="13" height="11" viewBox="0 0 13 11" fill="none" className="shrink-0">
                    <rect x="1" y="1" width="11" height="9" rx="1.5" fill={i ? "#c8c8a8" : "#6fbcb4"} stroke="#111" strokeWidth="1.5" />
                    {i === 0 && <path d="M10.5 1v9" stroke="#222" strokeWidth="2" />}
                    {i === 1 && <path d="M4 1v9M6.5 1v9M9 1v9M1 4h11" stroke="#222" />}
                  </svg>
                  <span
                    className={clsx(
                      "ml-[2px] px-px text-[10.5px] leading-[14px] tracking-[-0.4px] whitespace-nowrap",
                      i === 1 && "bg-[#f0f0f0]",
                    )}
                  >
                    {label}
                  </span>
                </div>
              ))}
            </div>
          </div>
          <div className="flex h-[18px] items-start bg-[#f0f0f0]">
            <div className="mt-[3px] ml-[3px]">
              <Chevron d={LEFT} />
            </div>
            <div className="ml-[4px] h-full w-[99px] bg-[#cdcdcd]" />
            <div className="mt-[3px] ml-[6px]">
              <Chevron d={RIGHT} />
            </div>
          </div>
        </div>
        <div className="w-[6px] shrink-0 border-r-2 border-l border-r-[#74797f] border-l-[#999] bg-[#f0f0f0]" />
        <div className="flex w-[404px] shrink-0 flex-col bg-white">
          <div className="h-[448px] shrink-0 overflow-hidden">
            <div className="flex h-[16px] border-b border-[#777] bg-[#f3f3f3] text-[10.5px] leading-[17px] tracking-[-0.35px]">
              <div className="w-[41px] shrink-0 border-r border-[#888] pl-[5px]">No.</div>
              <div className="w-[137px] shrink-0 border-r border-[#888] text-center">Name</div>
              <div className="w-[75px] shrink-0 border-r border-[#888] text-center">Address</div>
              <div className="w-[151px] shrink-0 text-center">Refresh Rate</div>
            </div>
            {Array.from({ length: 24 }, (_, i) => (
              <div
                key={i}
                className="flex h-[18.35px] text-[10.5px] leading-[18px] tracking-[-0.5px] whitespace-nowrap"
              >
                <div className="w-[41px] shrink-0 border-t border-r-2 border-b-2 border-t-[#efefef] border-r-[#6a6a6a] border-b-[#4a4a4a] bg-[#c0c0c0] pl-[9px] leading-[16px]">
                  {i + 1}
                </div>
                <div className="w-[137px] shrink-0 border-r border-b border-[#c4c4c4] pl-[9px]">{tags[i]?.name}</div>
                <div className="flex w-[75px] shrink-0 justify-between border-r border-b border-[#c4c4c4] pr-[2px] pl-[8px]">
                  <span>{tags[i]?.address}</span>
                  <div className="mt-px flex h-[16px] w-[16px] items-center justify-center border-r-2 border-b-2 border-r-[#666] border-b-[#666] bg-[#c6c6c6] text-[9px] leading-none">
                    ...
                  </div>
                </div>
                <div
                  className={clsx(
                    "w-[151px] shrink-0 tracking-[-0.4px]",
                    i === 1 ? "mt-[2px] ml-px border-t border-l border-[#555] pl-[3px] leading-[16px]" : "border-b border-[#c4c4c4] pl-[8px]",
                  )}
                >
                  Normal
                </div>
              </div>
            ))}
          </div>
          <div className="flex h-[18px] bg-[#f0f0f0]">
            <div className="mt-[3px] ml-[3px]">
              <Chevron d={LEFT} />
            </div>
            <div className="ml-[4px] h-full w-[209px] bg-[#cdcdcd]" />
          </div>
        </div>
      </div>
    </div>
  );
}

function Taskbar() {
  return (
    <div className="flex h-[34px] bg-[#040911] text-white">
      <div className="flex w-[40px] items-center justify-center">
        <svg width="14" height="14" viewBox="0 0 14 14">
          <path d="M0 2l6-.8V6.6H0zM6.7 1.1 14 0v6.6H6.7zM0 7.3h6v5.5L0 12zM6.7 7.3H14V14l-7.3-1z" fill="#fff" />
        </svg>
      </div>
      <div className="flex w-[287px] items-center bg-[#f2f2f2] pr-[12px] pl-[8px]">
        <div className="h-[17px] w-[17px] rounded-full border-[2.5px] border-[#151515]" />
        <span className="ml-[8px] text-[12px] tracking-[-0.33px] whitespace-nowrap text-[#444]">Digite aqui para pesquisar</span>
        <svg width="11" height="15" viewBox="0 0 11 15" fill="none" className="ml-auto">
          <rect x="3.5" y="1" width="4" height="8" rx="1" stroke="#333" />
          <path d="M1 7c0 5 9 5 9 0M5.5 11v3" stroke="#333" strokeWidth="1.3" />
        </svg>
      </div>
      <div className="flex w-[40px] items-center justify-center">
        <svg width="15" height="14" viewBox="0 0 15 14" fill="none" stroke="#ddd">
          <path d="M1.5 1v2.5h8V1M1.5 4.5h8v5h-8zM1.5 13v-2.5h8V13M12.5 1v12M11.5 5h2" />
        </svg>
      </div>
      <div className="flex w-[44px] items-center justify-center">
        <svg width="19" height="19" viewBox="0 0 20 20">
          <circle cx="10" cy="10" r="9" fill="#e8c02c" />
          <path d="M10 10 2.2 5.5A9 9 0 0 1 18 6h-8z" fill="#dd4535" />
          <path d="M10 10 2.2 5.5A9 9 0 0 0 9 19l4-7z" fill="#2f9e58" />
          <circle cx="10" cy="10" r="4.4" fill="#fff" />
          <circle cx="10" cy="10" r="3.5" fill="#4285f0" />
        </svg>
      </div>
      <div className="flex w-[39px] items-center justify-center">
        <svg width="19" height="17" viewBox="0 0 19 17">
          <path d="M0 1h7l2 2h10v13H0z" fill="#f3cf6a" />
          <path d="M0 5h19v11H0z" fill="#fbe28e" />
          <path d="M3 9h13v7h-4v-4H7v4H3z" fill="#3ea0dc" />
        </svg>
      </div>
      <div className="flex w-[46px] items-center justify-center">
        <svg width="20" height="20" viewBox="0 0 20 20">
          <path d="M0 7 10 0l10 7v12H0z" fill="#1670c4" />
          <path d="M0 6.5h20v1L10 14 0 7.5z" fill="#f4faff" />
          <path d="M0 7l10 7.5L20 7v12H0z" fill="#2b9cec" />
          <path d="M0 19 10 12l10 7z" fill="#53bdf6" />
        </svg>
      </div>
      <div className="flex w-[42px] items-center pl-[8px]">
        <svg width="19" height="20" viewBox="0 0 19 20">
          <path d="M13 0l6 2.5v15L13 20 5 16.5l8 .5V4l-3 .5z" fill="#8f62cc" />
          <path d="M0 7l2-1 4 3.5L10 5l2 1v8l-2 1-4-4-4 3-2-1zm1.8 2v3.5L4 10.8zM10.5 8 7.5 10.5l3 2.5z" fill="#8f62cc" fillRule="evenodd" />
        </svg>
      </div>
      <div className="flex h-[34px] w-[34px] items-center justify-center border-b-2 border-[#76b9ed]">
        <svg width="19" height="18" viewBox="0 0 19 18">
          <path d="M5 1h12l1 2-4 14H9L1 15z" fill="#9fd6d8" />
          <path d="M5 1h12L12 15l-11 .5z" fill="#4c9aa6" />
          <path d="M6 3h9l-3 8-8 1z" fill="#86c8cc" />
          <path d="M13 16l4-12 1 2-3 11z" fill="#c9b07a" />
        </svg>
      </div>
      <div className="ml-[4px] flex w-[41px] items-center justify-center border-b-2 border-[#76b9ed] bg-[#343a42]">
        <AppLogo size={22} />
      </div>
      <div className="ml-auto flex items-center">
        <svg width="13" height="14" viewBox="0 0 13 14" fill="none" stroke="#eee" strokeWidth="1.2">
          <circle cx="9" cy="3.5" r="2.3" />
          <circle cx="4" cy="7" r="2.3" />
          <path d="M.8 13c0-5 6.4-5 6.4 0M7.5 7.2c2-2 4.5-.5 4.7 2.3" />
        </svg>
        <svg width="11" height="7" viewBox="0 0 11 7" fill="none" className="ml-[18px]">
          <path d="M.5 6l5-5 5 5" stroke="#eee" strokeWidth="1.1" />
        </svg>
        <div className="ml-[8px] w-[24px] text-center text-[11px] leading-[15px] tracking-[-0.7px]">
          POR
          <br />
          PTB2
        </div>
        <div className="ml-[6px] w-[54px] text-center text-[11px] leading-[15px] tracking-[-0.75px] whitespace-nowrap">
          12:40
          <br />
          04/04/2020
        </div>
        <svg width="22" height="20" viewBox="0 0 22 20" fill="none" className="ml-[13px]">
          <path d="M1 0h13v12H8l-3 3v-3H1z" fill="#fff" />
          <path d="M3 3.5h9M3 6h9M3 8.5h6" stroke="#333" />
          <circle cx="13.5" cy="13.5" r="6" fill="#3a3f45" stroke="#888" strokeWidth=".8" />
          <text x="13.5" y="17" fontSize="10" fill="#fff" textAnchor="middle" fontFamily="Open Sans, sans-serif" fontWeight="bold">
            2
          </text>
        </svg>
        <div className="ml-[6px] h-[34px] w-[7px] border-l border-[#444]" />
      </div>
    </div>
  );
}

export default function App() {
  return (
    <div className="relative flex h-[720px] w-[1280px] flex-col overflow-hidden bg-[#f0f0f0] font-['Open_Sans','Noto_Sans',sans-serif] text-[11px] text-[#1a1a1a]">
      <TopBar />
      <Toolbars />

      <div className="flex h-[535px]">
        <ScreenManager />
        <div className="flex w-[1021px] flex-col border-t border-[#707070]">
          <div className="flex h-[519px]">
            <div className="relative w-[1007px] overflow-hidden bg-[#ababab]">
              <ScreenWindow />
              <TagTable />
            </div>
            <div className="flex w-[14px] flex-col items-center bg-[#f0f0f0]">
              <div className="pt-[4px]">
                <Chevron d={UP} />
              </div>
              <div className="mt-[2px] h-[473px] w-[12px] bg-[#cdcdcd]" />
              <div className="mt-auto pb-[3px]">
                <Chevron d={DOWN} />
              </div>
            </div>
          </div>
          <div className="flex h-[15px] items-center border-t border-white bg-[#f0f0f0] pl-[2px]">
            <Chevron d={LEFT} />
            <div className="ml-[4px] h-[13px] w-[948px] bg-[#cdcdcd]" />
            <div className="ml-[34px]">
              <Chevron d={RIGHT} />
            </div>
          </div>
        </div>
      </div>

      <div className="flex h-[16px] items-end border-b border-[#e0e0e0] bg-[#f0f0f0] pl-[6px] leading-[12px] text-[#333]">
        <div className="h-[14px] w-[106px] border-t border-l border-[#a8a8a8]" />
        <div className="h-[14px] w-[297px] border-t border-l border-[#a8a8a8]" />
        <div className="flex h-[14px] w-[822px] border-t border-l border-[#a8a8a8] pl-[4px] text-[10px] tracking-[-0.6px]">
          <span className="w-[38px]">208, 10</span>
          <span>Screen Zoom: 100%</span>
        </div>
        <div className="h-[14px] w-[38px] border-t border-l border-[#a8a8a8] pl-[15px] text-[10px] tracking-[-0.5px] text-[#8a8a8a]">
          Insert
        </div>
      </div>
      <Taskbar />

      {/* pointer highlight */}
      <div className="absolute top-[117px] left-[845px] h-[39px] w-[38px] rounded-full bg-linear-to-b from-[#f0ee12] from-46% to-[#a9a643] to-46%" />
      <svg width="12" height="18" viewBox="0 0 12 18" className="absolute top-[136px] left-[863px]">
        <path d="M1.500 1v13l3-2.500 2 4.500 2.500-1-2-4.500h3.500z" fill="#fff" stroke="#333" />
      </svg>
    </div>
  );
}
